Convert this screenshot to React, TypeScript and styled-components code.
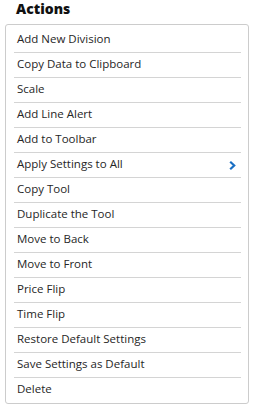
import React from "react";
import styled, { createGlobalStyle } from "styled-components";

const Global = createGlobalStyle`
  html, body { margin: 0; padding: 0; background: #ffffff; }
  body { font-family: "Open Sans", "Liberation Sans", sans-serif; }
`;

const Wrap = styled.div`
  width: 255px;
  height: 408px;
  padding: 0 6px 0 5px;
  box-sizing: border-box;
  display: flex;
  flex-direction: column;
`;

const Title = styled.h2`
  margin: 0;
  height: 24px;
  padding-left: 11px;
  font-size: 14px;
  font-weight: 800;
  line-height: 18px;
  color: #111111;
`;

const Panel = styled.div`
  border: 1px solid #cccccc;
  border-radius: 3px;
  padding: 3px 7px 2px 8px;
  box-sizing: border-box;
  height: 380px;
`;

const List = styled.ul`
  list-style: none;
  margin: 0;
  padding: 0;
`;

const Item = styled.li<{ $last?: boolean }>`
  height: 24px;
  box-sizing: content-box;
  display: flex;
  align-items: center;
  justify-content: space-between;
  padding: 0 5px 0 3px;
  font-size: 11.5px;
  line-height: 14px;
  color: #262626;
  border-bottom: ${(p) => (p.$last ? "none" : "1px solid #d4d4d4")};
`;

const Label = styled.span`
  margin-top: -2px;
`;

const Chevron = () => (
  <svg width="7" height="9" viewBox="0 0 7 9" aria-hidden="true">
    <path d="M1.2 0.8 L5.2 4.5 L1.2 8.2" fill="none" stroke="#1a6fc4" strokeWidth="2.2" />
  </svg>
);

const items = [
  "Add New Division",
  "Copy Data to Clipboard",
  "Scale",
  "Add Line Alert",
  "Add to Toolbar",
  "Apply Settings to All",
  "Copy Tool",
  "Duplicate the Tool",
  "Move to Back",
  "Move to Front",
  "Price Flip",
  "Time Flip",
  "Restore Default Settings",
  "Save Settings as Default",
  "Delete",
];

export default function App() {
  return (
    <>
      <Global />
      <Wrap>
        <Title>Actions</Title>
        <Panel>
          <List>
            {items.map((t, i) => (
              <Item key={t} $last={i === items.length - 1}>
                <Label>{t}</Label>
                {t === "Apply Settings to All" && <Chevron />}
              </Item>
            ))}
          </List>
        </Panel>
      </Wrap>
    </>
  );
}
